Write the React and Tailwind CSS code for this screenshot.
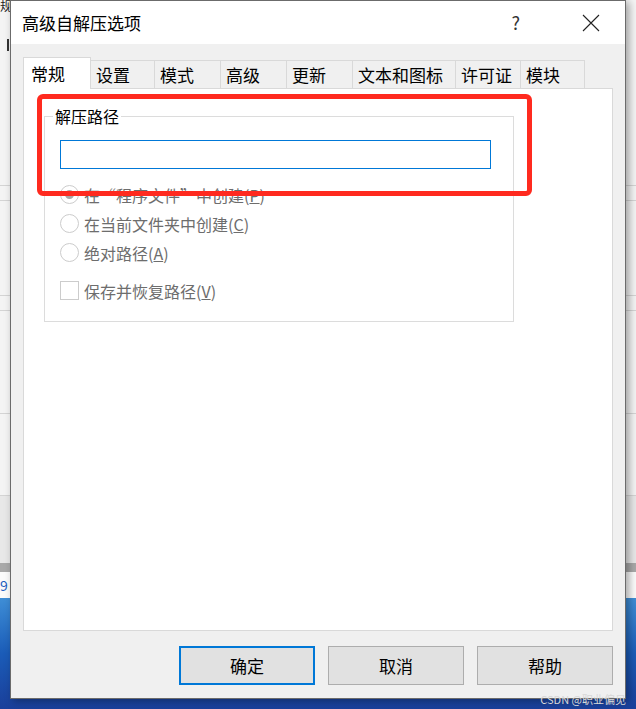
import React from 'react';

const TABS = [
  { label: '常规', w: 'w-[68px]', active: true },
  { label: '设置', w: 'w-[64px]' },
  { label: '模式', w: 'w-[66px]' },
  { label: '高级', w: 'w-[66px]' },
  { label: '更新', w: 'w-[66px]' },
  { label: '文本和图标', w: 'w-[103px]' },
  { label: '许可证', w: 'w-[65px]' },
  { label: '模块', w: 'w-[64px]' },
];

const FONT = { fontFamily: '"Noto Sans CJK SC", "Noto Sans", sans-serif' };

function Radio({ checked, label, hot }) {
  return (
    <div className="flex items-center h-[29px]">
      <span className="w-[19px] h-[19px] rounded-full border border-[#cccccc] bg-white flex items-center justify-center">
        {checked && <span className="w-[9px] h-[9px] rounded-full bg-[#a8a8a8]" />}
      </span>
      <span className="ml-[5px] text-[16px] text-[#6d6d6d] leading-none">
        {label}(<span className="underline">{hot}</span>)
      </span>
    </div>
  );
}

export default function App() {
  return (
    <div className="relative w-[636px] h-[709px] overflow-hidden" style={FONT}>
      {/* desktop + app behind */}
      <div className="flex flex-col w-full h-full">
        <div className="h-[563px] bg-[#f4f4f4] flex flex-col">
          <div className="h-[14px] text-[12px] leading-[12px] text-[#222] overflow-hidden">规</div>
          <div className="h-[171px] flex flex-col">
            <div className="ml-[7px] mt-[25px] w-[2px] h-[12px] bg-[#333]" />
          </div>
          <div className="h-[15px] border-t border-[#d4d4d4]" />
          <div className="h-[95px] border-t border-[#d4d4d4]" />
          <div className="h-[15px] border-t border-[#d4d4d4]" />
          <div className="h-[103px] border-t border-[#d4d4d4]" />
          <div className="h-[82px] border-t border-[#d4d4d4]" />
          <div className="flex-1 border-t border-[#d4d4d4] bg-[#e8e8e8]" />
        </div>
        <div className="h-[9px] bg-[#a9a9a9]" />
        <div className="h-[26px] bg-[#fbfbfb] text-[14px] leading-[26px] text-[#1e5fc0]">9</div>
        <div className="flex-1 bg-gradient-to-b from-[#3f8ed6] via-[#1b5cb8] to-[#1a3f9a]" />
      </div>

      {/* dialog window */}
      <div className="absolute left-[10px] top-0 w-[616px] h-[699px] flex flex-col border border-[#6b6b6b] bg-[#f0f0f0] shadow-[3px_2px_8px_rgba(0,0,0,0.35)]">
        <div className="h-[43px] bg-white flex items-center shrink-0">
          <span className="ml-[11px] text-[17px] text-black">高级自解压选项</span>
          <span className="ml-auto mr-[61px] text-[18px] text-[#333]">?</span>
          <svg width="20" height="20" viewBox="0 0 20 20" className="mr-[24px]">
            <path d="M2 2 L18 18 M18 2 L2 18" stroke="#222" strokeWidth="1.1" fill="none" />
          </svg>
        </div>

        <div className="flex-1 flex flex-col pt-[13px] px-[12px] pb-[13px]">
          {/* tabs */}
          <div className="flex items-end h-[31px] relative z-10">
            {TABS.map((t) => (
              <div
                key={t.label}
                className={
                  t.active
                    ? `${t.w} h-[32px] bg-white border border-b-0 border-[#d9d9d9] flex items-center pl-[7px] text-[17px] text-black -mb-[1px]`
                    : `${t.w} h-[28px] bg-[#f0f0f0] border border-l-0 border-b-0 border-[#d9d9d9] flex items-center pl-[5px] text-[17px] text-black`
                }
              >
                {t.label}
              </div>
            ))}
          </div>

          {/* tab panel */}
          <div className="h-[543px] w-[590px] bg-white border border-[#d9d9d9] pt-[16px] pl-[20px]">
            <fieldset className="w-[470px] h-[217px] border border-[#dcdcdc] pl-[15px] pt-0">
              <legend className="ml-[-7px] px-[2px] text-[16px] text-black leading-[22px]">解压路径</legend>
              <div className="mt-[13px] w-[431px] h-[29px] border border-[#0078d7] bg-white" />
              <div className="mt-[11px] flex flex-col">
                <Radio checked label="在“程序文件”中创建" hot="P" />
                <Radio label="在当前文件夹中创建" hot="C" />
                <Radio label="绝对路径" hot="A" />
                <div className="flex items-center h-[29px] mt-[9px]">
                  <span className="w-[19px] h-[19px] border border-[#cccccc] bg-white" />
                  <span className="ml-[5px] text-[16px] text-[#6d6d6d] leading-none">
                    保存并恢复路径(<span className="underline">V</span>)
                  </span>
                </div>
              </div>
            </fieldset>
          </div>

          {/* buttons */}
          <div className="mt-[15px] flex justify-end gap-[13px]">
            <button className="w-[136px] h-[39px] bg-[#e1e1e1] border-2 border-[#0078d7] text-[17px] text-black">确定</button>
            <button className="w-[136px] h-[39px] bg-[#e1e1e1] border border-[#adadad] text-[17px] text-black">取消</button>
            <button className="w-[136px] h-[39px] bg-[#e1e1e1] border border-[#adadad] text-[17px] text-black">帮助</button>
          </div>
        </div>
      </div>

      {/* red annotation box */}
      <div className="absolute left-[37px] top-[94px] w-[495px] h-[102px] border-[5px] border-[#ff2a1f] rounded-[6px]" />

      {/* watermark */}
      <div className="absolute right-[10px] bottom-[4px] text-[11px] text-[#d8d8d8] leading-none">CSDN @职业偏见</div>
    </div>
  );
}
